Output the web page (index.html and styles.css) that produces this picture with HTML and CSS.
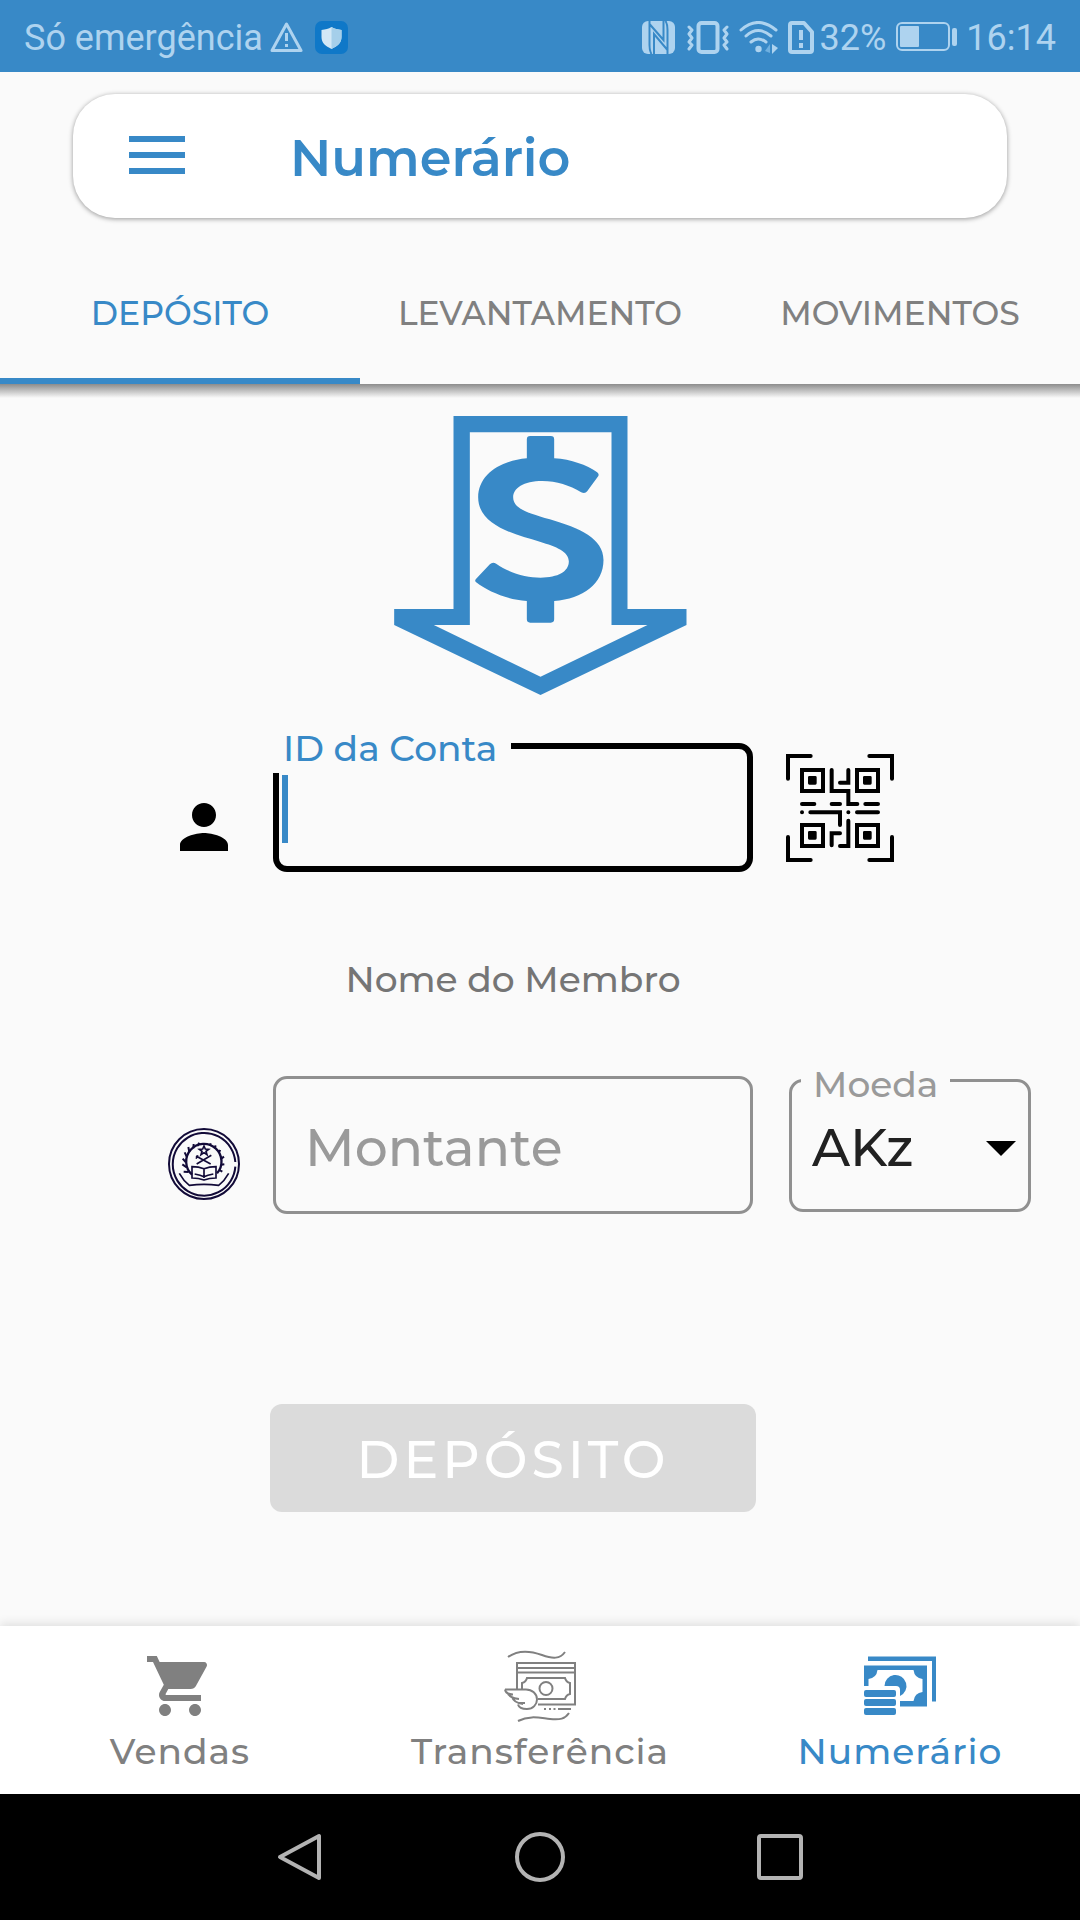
FILE: index.html
```html
<!DOCTYPE html>
<html lang="pt">
<head>
<meta charset="utf-8">
<meta name="viewport" content="width=device-width, initial-scale=1">
<title>Numerário</title>
<link rel="stylesheet" href="styles.css">
</head>
<body>
<div class="status">
  <span class="status-text">Só emergência</span>
  <svg class="warn" width="33" height="33" viewBox="0 0 33 33" fill="none" stroke="currentColor"><path d="M16.500 3 31 29.500H2z" stroke-width="3" stroke-linejoin="round"/><path d="M16.500 12v8M16.500 23v3" stroke-width="3"/></svg>
  <svg class="shield" width="33" height="33" viewBox="0 0 33 33"><rect width="33" height="33" rx="7" fill="#0f78c8"/><path d="M16.500 6c3 2 6 2.500 10 3v7c0 6-4 9-10 12-6-3-10-6-10-12V9c4-.5 7-1 10-3z" fill="#d3e8f6"/><path d="M16.500 6c3 2 6 2.500 10 3v7c0 6-4 9-10 12z" fill="#a5cfea"/></svg>
  <div class="status-right">
    <svg width="33" height="33" viewBox="0 0 33 33"><rect width="33" height="33" rx="6" fill="currentColor"/><path d="M7.500 0v24q0 6 2 9M25.500 33V9q0-6-2-9M12 33V13l13.500 16M21.500 0v19L7.500 3" fill="none" stroke="#3889c7" stroke-width="2"/></svg>
    <svg class="vibrate" width="42" height="33" viewBox="0 0 42 33" fill="none" stroke="currentColor" stroke-width="3" stroke-linejoin="round" stroke-linecap="round"><rect x="11.500" y="2" width="19" height="29" rx="3" stroke-width="4"/><path d="M2 6l3 3-3 4 3 4-3 4 3 3-3 4M40 6l-3 3 3 4-3 4 3 4-3 3 3 4"/></svg>
    <svg class="wifi" width="39" height="33" viewBox="0 0 39 33" fill="none" stroke="currentColor" stroke-width="3" stroke-linecap="round"><path d="M2 9q17-15 35 0M7 15q12-11 25 0M12 21q7-6 15 0"/><circle cx="19.500" cy="28" r="3.200" fill="currentColor" stroke="none"/><path d="M26 30l5-7v9z" fill="#6fb0e0" stroke="none"/><path d="M33 23l6 4-6 6z" fill="currentColor" stroke="none"/></svg>
    <svg class="sim" width="26" height="33" viewBox="0 0 26 33" fill="none" stroke="currentColor" stroke-width="4"><path d="M4 2h12l8 9v18q0 2-2 2H4q-2 0-2-2V4q0-2 2-2z" stroke-linejoin="round"/><path d="M13 9v10M13 22v5"/></svg>
    <span class="status-text battery-text">32%</span>
    <svg class="battery" width="61" height="30" viewBox="0 0 61 30"><rect x="1" y="1" width="52" height="27" rx="5" fill="none" stroke="currentColor" stroke-width="2"/><rect x="4" y="4" width="19" height="21" rx="1" fill="currentColor"/><rect x="56" y="6" width="5" height="18" rx="2" fill="currentColor"/></svg>
    <span class="status-text">16:14</span>
  </div>
</div>

<header class="toolbar">
  <button class="menu" type="button" aria-label="Menu"><span></span><span></span><span></span></button>
  <h1>Numerário</h1>
</header>

<nav class="tabs">
  <a class="tab active" href="#deposito">DEPÓSITO</a>
  <a class="tab" href="#levantamento">LEVANTAMENTO</a>
  <a class="tab" href="#movimentos">MOVIMENTOS</a>
</nav>
<div class="tabs-shadow"></div>

<main>
  <svg class="deposit-icon" width="293" height="279" viewBox="43 48 878 837" fill="#3889c7"><path fill-rule="evenodd" d="M221 48H743V627H920V675L482 885 43 675V627H221zM270 97V675H162L482 830 803 675H695V97z"/><path d="M441 118q0-10 10-10h62q10 0 10 10v57c52 3 97 20 129 42q7 5 3 12l-33 45q-6 8-18 3c-34-21-74-34-116-34-58 0-88 22-88 49 0 33 40 46 110 66 90 27 161 57 161 122 0 70-61 117-148 123v55q0 10-10 10h-62q-10 0-10-10v-55c-61-5-116-28-152-56q-6-5 0-11l41-43q8-8 19-2c41 29 91 42 133 42 53 0 85-18 85-49 0-29-37-44-87-59-80-23-185-50-185-133 0-67 65-110 146-117z"/></svg>

  <form class="form">
    <svg class="row-icon" width="72" height="72" viewBox="0 0 24 24"><path d="M12 12c2.210 0 4-1.790 4-4s-1.790-4-4-4-4 1.790-4 4 1.790 4 4 4zm0 2c-2.670 0-8 1.340-8 4v2h16v-2c0-2.660-5.330-4-8-4z"/></svg>
    <div class="field focused">
      <input id="conta" type="text">
      <label class="notch" for="conta">ID da Conta</label>
      <span class="caret"></span>
    </div>
    <button class="qr" type="button" aria-label="QR">
      <svg width="108" height="108" viewBox="48 54 324 324" fill="none" stroke="#000" stroke-width="12" stroke-linecap="round"><path d="M54 128V60h68M298 60h68v68M54 303v69h68M298 372h68v-69"/><path d="M96 102h63v63H96zM261 102h63v63h-63zM96 267h63v63H96zM261 267h63v63h-63z"/><path d="M185 102v63h50v39h27M210 140h25v-38M96 204h37M185 204h25M286 204h38M96 229h.1M121 229h89v38M235 229h.1M261 229h63M185 328v-36h25M235 254v76h-25"/><path stroke="none" fill="#000" d="M118 120h18q4 0 4 4v18q0 4-4 4h-18q-4 0-4-4v-18q0-4 4-4zM283 120h18q4 0 4 4v18q0 4-4 4h-18q-4 0-4-4v-18q0-4 4-4zM118 285h18q4 0 4 4v18q0 4-4 4h-18q-4 0-4-4v-18q0-4 4-4zM283 285h18q4 0 4 4v18q0 4-4 4h-18q-4 0-4-4v-18q0-4 4-4z"/></svg>
    </button>

    <p class="member">Nome do Membro</p>

    <svg class="row-icon" width="72" height="72" viewBox="54 54 216 216" fill="none" stroke="#120a38" stroke-width="6"><circle cx="162" cy="162" r="105"/><path d="M256 156A94 94 0 1 0 256 170"/><path d="M126 194A53 53 0 1 1 201 190" stroke-width="7"/><path d="M116 186l-15-1M110 172l-13-9M107 156l-9-10M110 140l-6-13M118 126l-3-15M130 115l1-13M142 108l6-10M208 180l9 5M214 164l9-1M214 146l8-6M206 128l5-8M194 115l3-9M180 108l2-8" stroke-width="6"/><path d="M162 108l4 9 10 1-8 6 3 10-9-6-9 6 3-10-8-6 10-1z" stroke-width="5"/><path d="M138 138l44 24M184 136l-44 26M138 146l6-10" stroke-width="5"/><path d="M126 170q20 0 36 6 16-6 36-6v34q-20 0-36 6-16-6-36-6zM162 176v28M134 192q18 3 28 8 10-5 28-8" stroke-width="5"/><path d="M88 190q12 22 30 36 44-6 88 0 18-14 30-36M118 226q44-6 88 0" stroke-width="5"/></svg>
    <div class="field amount">
      <input id="montante" type="text" inputmode="decimal">
      <label class="resting" for="montante">Montante</label>
    </div>
    <div class="field currency">
      <select id="moeda"><option>AKz</option></select>
      <label class="notch" for="moeda">Moeda</label>
      <svg class="arrow" width="30" height="15" viewBox="0 0 30 15"><path d="M0 0h30L15 15z"/></svg>
    </div>

    <button class="submit" type="submit" disabled>DEPÓSITO</button>
  </form>
</main>

<nav class="bottom">
  <a href="#vendas">
    <svg width="72" height="72" viewBox="0 0 24 24" fill="currentColor"><path d="M7 18c-1.100 0-1.990.9-1.990 2S5.900 22 7 22s2-.9 2-2-.9-2-2-2zM1 2v2h2l3.600 7.590-1.350 2.450c-.16.28-.25.61-.25.96 0 1.100.9 2 2 2h12v-2H7.420c-.14 0-.25-.11-.25-.25l.03-.12.9-1.630h7.450c.75 0 1.410-.41 1.750-1.030l3.580-6.490A1 1 0 0 0 20 4H5.210l-.94-2H1zm16 16c-1.100 0-1.990.9-1.990 2s.89 2 1.990 2 2-.9 2-2-.9-2-2-2z"/></svg>
    Vendas
  </a>
  <a href="#transferencia">
    <svg width="72" height="72" viewBox="0 0 72 72" fill="none" stroke="currentColor" stroke-width="2"><path d="M4 7C15-1 27 1 38 5s18 4 23-3M14 71c12-6 22-3 32-2s15 0 19-6"/><path d="M13 39V13h58v41.500H34M13 18h58M13 22.500h58"/><path d="M18 39v-6q4-1 5-5h38q1 4 5 5v11q-4 1-5 5H34"/><ellipse cx="42" cy="38.500" rx="6.500" ry="6.500"/><path d="M1 39.500h21c6 0 11 4 11 10 0 5-4 9.500-10 9.500-5 0-8-1-9-4.500M1 39.500q1 5 8 5M3 42q2 6 12 7M8 47q2 6 11 7M13 53h8"/><path d="M40 59h2M45 59h2M49.500 59h2M54 59h13"/></svg>
    Transferência
  </a>
  <a class="active" href="#numerario">
    <svg width="72" height="72" viewBox="0 0 72 72" fill="currentColor"><path d="M4 6.500h68V51.500h-4V11H4z"/><path fill-rule="evenodd" d="M0 15.500h63v41H36V51h13.500q1-8 9-9V29q-8-1-9-9h-36q-1 8-9 9v7H0z"/><path d="M20.500 36a11 11 0 1 1 15.500 10V40q0-4-4-4z"/><rect y="40" width="32" height="7" rx="2"/><rect y="49" width="32" height="7" rx="2"/><rect y="58" width="32" height="7" rx="2"/></svg>
    Numerário
  </a>
</nav>

<div class="system">
  <button type="button" aria-label="Voltar"><svg width="48" height="48" viewBox="0 0 48 48"><path d="M43 3v42L4 24z"/></svg></button>
  <button type="button" aria-label="Início"><svg width="52" height="52" viewBox="0 0 52 52"><circle cx="26" cy="26" r="23"/></svg></button>
  <button type="button" aria-label="Recentes"><svg width="48" height="48" viewBox="0 0 48 48"><rect x="3" y="3" width="42" height="42" rx="2"/></svg></button>
</div>
</body>
</html>
```

FILE: styles.css
```css
* { box-sizing: border-box; }

body {
  margin: 0;
  min-height: 100vh;
  display: flex;
  flex-direction: column;
  background: #fafafa;
  color: #757575;
  font-family: "Montserrat", "Inter", sans-serif;
  font-size: 36px;
  font-weight: 500;
  line-height: 42px;
}

svg { display: block; flex: none; }
a { color: inherit; text-decoration: none; }
button, input, select { font: inherit; margin: 0; }
button { border: 0; padding: 0; background: none; }

/* Status bar */
.status {
  display: flex;
  align-items: center;
  height: 72px;
  padding: 2px 24px 0;
  background: #3889c7;
  color: #aed3ef;
}
.status-text {
  padding-top: 2px;
  font-family: "Roboto", sans-serif;
  font-size: 36px;
  font-weight: 400;
}
.warn { margin-left: 7px; }
.shield { margin-left: 12px; }
.status-right { display: flex; align-items: center; margin-left: auto; }
.vibrate { margin-left: 12px; }
.wifi { margin-left: 10px; }
.sim { margin-left: 10px; }
.battery-text { margin-left: 6px; }
.battery { margin: 0 9px 0 10px; }

/* Toolbar */
.toolbar {
  display: flex;
  align-items: center;
  height: 124px;
  margin: 22px 73px;
  padding: 0 0 2px 56px;
  border-radius: 42px;
  background: #fff;
  box-shadow: 0 1px 5px rgba(0, 0, 0, .4);
}
.menu { display: grid; gap: 10px; width: 56px; }
.menu span { height: 6px; background: #3889c7; }
h1 {
  margin: 6px 0 0 105px;
  color: #3889c7;
  font-size: 51px;
  font-weight: 600;
  line-height: 64px;
}

/* Tabs */
.tabs { display: grid; grid-template-columns: repeat(3, 1fr); height: 144px; }
.tab {
  display: flex;
  align-items: center;
  justify-content: center;
  padding-top: 8px;
  border-bottom: 6px solid transparent;
  color: #808080;
  font-size: 33px;
}
.tab.active { color: #3889c7; border-color: #3889c7; }
.tabs-shadow { height: 14px; background: linear-gradient(#8c8c8c, #fafafa); }

/* Form */
main { flex: 1; padding: 18px 0 112px; }
.deposit-icon { margin: 0 auto 48px; }
.form {
  display: grid;
  grid-template-columns: 138px minmax(0, 1fr) 278px;
  align-items: center;
  padding: 0 49px 0 135px;
}
.row-icon { grid-column: 1; margin: 38px auto 0; }
.field { position: relative; }
.field input, .field select {
  display: block;
  width: 100%;
  height: 138px;
  padding: 0 34px;
  border: 3px solid #909090;
  border-radius: 14px;
  background: transparent;
  color: #212121;
  font-size: 52px;
  outline: 0;
  appearance: none;
}
.field.focused input { height: 129px; border: 6px solid #000; }
.notch { position: absolute; background: #fafafa; }
.focused .notch {
  top: -16px;
  left: 0;
  padding: 0 14px 4px 10px;
  color: #3889c7;
}
.caret {
  position: absolute;
  top: 32px;
  left: 9px;
  width: 6px;
  height: 68px;
  background: #3889c7;
}
.qr { margin-left: 33px; justify-self: start; }
.member { grid-column: 2; margin: 86px 0 76px; text-align: center; }
.resting {
  position: absolute;
  top: 40px;
  left: 32px;
  color: #9a9a9a;
  font-size: 52px;
  line-height: 64px;
}
.currency { margin-left: 36px; }
.field.currency select { height: 133px; padding: 6px 20px 0; }
.currency .notch { top: -16px; left: 12px; padding: 0 12px; color: #9a9a9a; }
.arrow { position: absolute; top: 62px; right: 15px; pointer-events: none; }
.submit {
  grid-column: 2;
  height: 108px;
  margin: 190px -3px 0;
  padding-top: 4px;
  border-radius: 12px;
  background: #dbdbdb;
  color: #fff;
  font-size: 52px;
  letter-spacing: 4px;
}

/* Bottom navigation */
.bottom {
  display: grid;
  grid-template-columns: repeat(3, 1fr);
  height: 168px;
  background: #fff;
  color: #808080;
  letter-spacing: 1px;
  box-shadow: 0 -3px 9px rgba(0, 0, 0, .1);
}
.bottom a {
  display: flex;
  flex-direction: column;
  align-items: center;
  gap: 8px;
  padding-top: 24px;
}
.bottom .active { color: #3889c7; }

/* System keys */
.system {
  display: flex;
  align-items: center;
  justify-content: center;
  gap: 190px;
  height: 126px;
  background: #000;
}
.system svg { fill: none; stroke: #b3b3b3; stroke-width: 4; stroke-linejoin: round; }
```
